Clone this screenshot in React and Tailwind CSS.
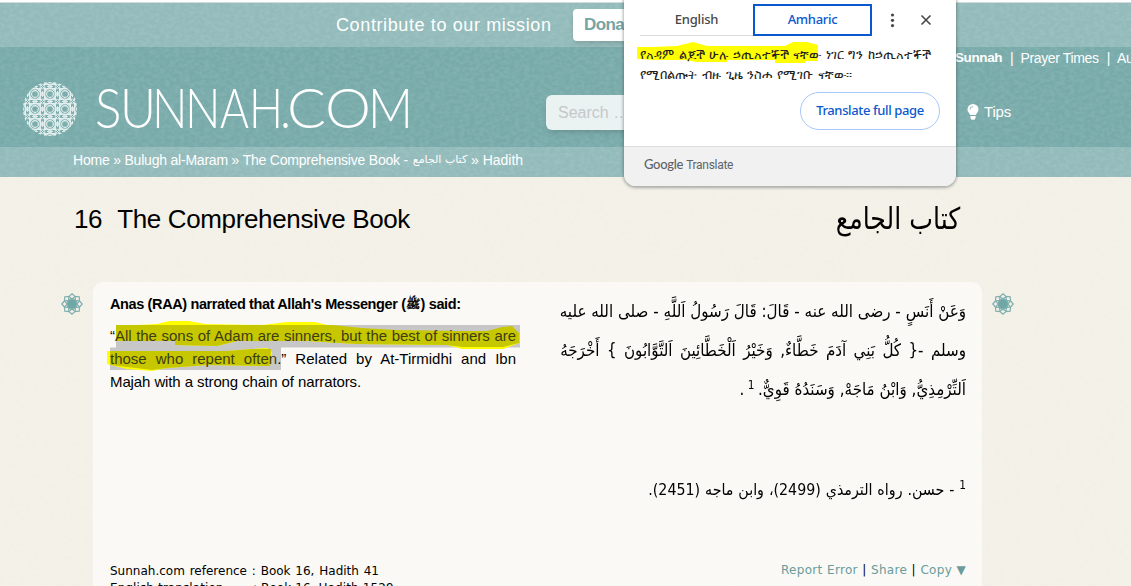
import React from "react";

function Grain({ id, dark, opacity }) {
  return (
    <svg className="pointer-events-none absolute inset-0 h-full w-full" style={{ opacity }} aria-hidden="true">
      <filter id={id} x="0" y="0" width="100%" height="100%">
        <feTurbulence type="fractalNoise" baseFrequency="0.2 0.28" numOctaves="2" seed="4" />
        <feColorMatrix values={`0 0 0 0 ${dark[0]} 0 0 0 0 ${dark[1]} 0 0 0 0 ${dark[2]} 2.4 0 0 0 -0.8`} />
      </filter>
      <rect width="100%" height="100%" filter={`url(#${id})`} />
    </svg>
  );
}

function Emblem() {
  const cells = [];
  for (let r = -2; r <= 2; r++) for (let c = -2; c <= 2; c++) cells.push([27 + c * 15, 27 + r * 15]);
  return (
    <svg className="block h-[54px] w-[54px]" viewBox="0 0 54 54" fill="none" stroke="#e6f1f0" strokeWidth="1.1">
      <clipPath id="disc"><circle cx="27" cy="27" r="27" /></clipPath>
      <g clipPath="url(#disc)">
        {cells.map(([x, y], i) => (
          <g key={i} transform={`translate(${x} ${y})`}>
            <circle r="3.4" />
            <rect x="-5.3" y="-5.3" width="10.6" height="10.6" />
            <rect x="-5.3" y="-5.3" width="10.6" height="10.6" transform="rotate(45)" />
            <path d="M-7.500 -3V3M-3 -7.500H3M-7.500 -7.500L-3.600 -3.600M7.500 7.500L3.600 3.600M-7.500 7.500L-3.600 3.600M7.500 -7.500L3.600 -3.600M-7.500 -5.300H7.500M-7.500 5.300H7.500M-5.300 -7.500V7.500M5.300 -7.500V7.500" strokeWidth=".9" />
          </g>
        ))}
      </g>
    </svg>
  );
}

function Rosette() {
  return (
    <svg className="block h-[22px] w-[22px]" viewBox="-11 -11 22 22" fill="none" stroke="#7fb0af" strokeWidth="1.2">
      <circle r="4.9" fill="#6fa6a6" />
      {[0, 45, 90, 135, 180, 225, 270, 315].map((a) => (
        <path key={a} transform={`rotate(${a})`} d="M0 -10.2L3.200 -7.400L0 -5L-3.200 -7.400Z" />
      ))}
    </svg>
  );
}

// letter, left offset, advance width
const WORDMARK = [
  ["S", 1, 26.5], ["U", 26, 36], ["N", 58, 35.5], ["N", 91, 35.5], ["A", 126, 29],
  ["H", 155, 34], [".", 186, 11], ["C", 193, 39], ["O", 231, 46], ["M", 274, 45],
];

function TranslatePopup() {
  return (
    <aside className="absolute left-[624px] -top-3 flex h-[198px] w-[332px] flex-col overflow-hidden rounded-xl bg-white font-['Noto_Sans','Open_Sans',sans-serif] shadow-[0_1px_3px_1px_rgba(60,64,67,0.4)]">
      <div className="flex h-[158px] flex-col pt-4 pl-4">
        <div className="flex h-8">
          <div className="flex w-[113px] items-center justify-center border-b border-[#dadce0] text-[13px] font-medium tracking-[-0.2px] text-[#474747]">English</div>
          <div className="flex w-[119px] items-center justify-center border-2 border-[#0b57d0] text-[13px] font-medium tracking-[-0.3px] text-[#0b57d0]">Amharic</div>
          <svg className="ml-3 h-8 w-[18px]" viewBox="0 0 18 32" fill="#474747"><circle cx="8.500" cy="11" r="1.6" /><circle cx="8.500" cy="16.3" r="1.6" /><circle cx="8.500" cy="21.6" r="1.6" /></svg>
          <svg className="ml-[15px] h-8 w-[18px]" viewBox="0 0 18 32" fill="none" stroke="#474747" strokeWidth="1.6"><path d="M4.5 11.5l9 9M13.5 11.5l-9 9" /></svg>
        </div>
        <div className="relative mt-2 h-10 text-[13px] leading-5 text-[#1f1f1f]">
          <svg className="absolute -left-[3px] -top-[2px] h-6 w-[184px]" viewBox="0 0 184 24" fill="#ffff00"><path d="M0 5H15L40 4L56 0L70 4H148L156 0H170L181 3V19H168V21H138V18H90V20H60L48 18H18L0 17Z" /></svg>
          <div className="relative w-[291px] [text-align-last:justify] whitespace-nowrap">የአዳም ልጆች ሁሉ ኃጢአተኞች ናቸው ነገር ግን ከኃጢአተኞች</div>
          <div className="relative w-[212px] [text-align-last:justify] whitespace-nowrap">የሚበልጡት ብዙ ጊዜ ንስሐ የሚገቡ ናቸው።</div>
        </div>
        <div className="mt-2 ml-[160px] flex h-[38px] w-[140px] items-center justify-center rounded-full border border-[#a8c7fa] text-[13px] font-medium tracking-[-0.37px] whitespace-nowrap text-[#0b57d0]">Translate full page</div>
      </div>
      <div className="flex flex-1 items-center gap-[3px] border-t border-[#dadce0] bg-[#f1f1f1] pb-1 pl-5 text-xs text-[#5f6368]">
        <span className="font-['Lato',sans-serif] text-[13px] font-medium tracking-[-0.3px]">Google</span><span className="font-['Roboto',sans-serif] tracking-[-0.3px]">Translate</span>
      </div>
    </aside>
  );
}

export default function App() {
  return (
    <div className="relative flex h-[586px] w-[1131px] flex-col overflow-hidden bg-[#f4f1e9] font-['Liberation_Sans',Arial,sans-serif] text-black">
      <Grain id="paper" dark={[0.87, 0.85, 0.77]} opacity={0.35} />
      <header className="relative flex flex-col bg-[#78aaaa] text-white">
        <Grain id="teal" dark={[0.38, 0.57, 0.57]} opacity={0.25} />
        <div className="relative h-[3px] border-b border-[#d5d9d9] bg-white" />
        <div className="relative flex h-11 items-center bg-white/20 pl-[336px]">
          <span className="w-[216px] text-[18px] tracking-[0.62px] whitespace-nowrap">Contribute to our mission</span>
          <span className="ml-[21px] flex h-8 w-[90px] items-center rounded bg-white pl-[11px] text-[17px] font-bold tracking-[-0.6px] text-[#76a4a4] shadow-md">Donate</span>
        </div>
        <div className="relative flex h-[100px]">
          <div className="flex pt-[35px] pl-[23px]"><Emblem /></div>
          <svg className="mt-[30px] ml-[17px] h-[60px] w-[320px] shrink-0" viewBox="0 0 320 60" fill="#fff" fontFamily="Lato" fontWeight="300" fontSize="56">
            <text y="51">
              {WORDMARK.map(([ch, x, w], i) => (
                <tspan key={i} x={x} textLength={w} lengthAdjust="spacingAndGlyphs">{ch}</tspan>
              ))}
            </text>
          </svg>
          <div className="mt-12 ml-[132px] flex h-[35px] w-[380px] items-center rounded-md bg-[#eaf2f2] pl-3 text-base text-[#c5c8c8] shadow-md">Search …</div>
          <div className="absolute top-0 left-[955px] flex h-full w-[176px] flex-col overflow-hidden whitespace-nowrap">
            <div className="flex h-[21px] items-center gap-[7px] text-sm tracking-[-0.35px]"><b className="text-[13.500px] tracking-[-0.4px]">Sunnah</b><span className="ml-px">|</span><span>Prayer Times</span><span className="ml-px">|</span><span>Audio</span></div>
            <div className="mt-[34px] ml-3 flex items-center gap-[5px] text-[15px] leading-5 tracking-[-0.2px]">
              <svg className="h-4 w-3" viewBox="0 0 12 16" fill="#fff"><path d="M6 0a5.5 5.5 0 0 0-5.5 5.5C.5 8 2.6 9 3.2 11h5.6C9.400 9 11.500 8 11.500 5.500A5.500 5.500 0 0 0 6 0M3.400 12h5.200v2L7.500 15.700h-3L3.400 14z" /><path d="M3 5.500a3 3 0 0 1 3-3" fill="none" stroke="#76a8a8" strokeWidth=".8" /></svg>
              Tips
            </div>
          </div>
        </div>
        <nav className="relative flex h-[30px] items-center bg-white/20 pb-1 pl-[73px] text-sm whitespace-nowrap">
          <span className="w-[335px] tracking-[-0.22px] [text-align-last:justify]">Home » Bulugh al-Maram » The Comprehensive Book -</span>
          <span dir="rtl" className="ml-1 w-[56px] text-center font-['DejaVu_Sans',sans-serif] text-[11px]">كتاب الجامع</span>
          <span className="ml-[3px]">» Hadith</span>
        </nav>
      </header>

      <main className="relative flex flex-1 flex-col">
        <div className="flex h-[105px] items-start justify-between pr-[171px] pl-[74px]">
          <h1 className="flex gap-[15px] pt-[26px] text-[26px] leading-8 whitespace-nowrap"><span className="tracking-[-0.4px]">16</span><span className="tracking-[-0.35px]">The Comprehensive Book</span></h1>
          <h1 dir="rtl" className="origin-right scale-x-[0.84] pt-[22px] font-['DejaVu_Sans',sans-serif] text-[30px] leading-10 whitespace-nowrap">كتاب الجامع</h1>
        </div>
        <div className="flex flex-1 items-start pl-[61px]">
          <div className="mt-[11px]"><Rosette /></div>
          <article className="ml-[10px] flex h-[320px] w-[889px] flex-col rounded-[10px] bg-white/60 pt-2 pr-4 pl-[17px]">
            <div className="flex h-[273px] justify-between">
              <section className="w-[410px] text-[15px] leading-[23px] whitespace-nowrap">
                <p className="flex h-7 items-center text-[14.5px] font-bold tracking-[-0.38px]">Anas (RAA) narrated that Allah's Messenger (<span className="font-['DejaVu_Sans'] text-[12px]">ﷺ</span>) said:</p>
                <div className="relative mt-[6px]">
                  <svg className="absolute -left-[3px] -top-[3px] h-[54px] w-[416px]" viewBox="0 0 416 54">
                    <path d="M9 4H413V26.500H174V49H3V26.500H9Z" fill="#c7c7c7" />
                    <path d="M9 5L50 3L62 0H82L98 3L155 4L180 1H208L220 4L260 8L290 11L350 14L380 10L400 5L412 6V22L396 28H355L340 24L250 23L200 20L130 20L110 25L68 24V20H9Z" fill="#ffff00" />
                    <path d="M0 30L40 31L120 30L145 28L160 27L165 31L163 45L100 44L60 47L45 50L20 48L0 43Z" fill="#ffff00" />
                    <path d="M9 4H412V22L396 26H355L340 24L250 23L200 20L130 20L110 25L68 24V20H9ZM3 30L120 30L145 28H164L163 45L100 44L60 47L45 49L3 44Z" fill="#c7c700" />
                    <path d="M225 4H413V13L405 5L395 6L380 10L350 10L290 9L255 7Z" fill="#c7c7c7" />
                  </svg>
                  <p className="relative w-[406px] tracking-[-0.05px] [text-align-last:justify]">“<span className="text-[#3d3d12]">All the sons of Adam are sinners, but the best of sinners are</span></p>
                  <p className="relative w-[406px] [text-align-last:justify]"><span className="text-[#3d3d12]">those who repent often</span>.” Related by At-Tirmidhi and Ibn</p>
                  <p className="w-[251px] tracking-[-0.12px] [text-align-last:justify]">Majah with a strong chain of narrators.</p>
                </div>
              </section>
              <section dir="rtl" className="w-[406px] pt-[2px] font-['DejaVu_Sans',sans-serif] text-[17px] leading-[39px] whitespace-nowrap">
                <div className="w-[456px] origin-right scale-x-[0.89]">
                  <p className="[text-align-last:justify]">وَعَنْ أَنَسٍ - رضى الله عنه - قَالَ: قَالَ رَسُولُ اَللَّهِ - صلى الله عليه</p>
                  <p className="[text-align-last:justify]">وسلم -{"{"} كُلُّ بَنِي آدَمَ خَطَّاءٌ, وَخَيْرُ اَلْخَطَّائِينَ اَلتَّوَّابُونَ {"}"} أَخْرَجَهُ</p>
                  <p>اَلتِّرْمِذِيُّ, وَابْنُ مَاجَهْ, وَسَنَدُهُ قَوِيٌّ.<sup className="text-[12px] leading-none"> 1 </sup>.</p>
                  <p className="mt-[69px] w-[357px] text-base [text-align-last:justify]"><sup className="text-[12px] leading-none">1</sup> - حسن. رواه الترمذي (2499)، وابن ماجه (2451).</p>
                </div>
              </section>
            </div>
            <footer className="flex justify-between font-['DejaVu_Sans',sans-serif] text-xs leading-[17px] whitespace-nowrap">
              <div>
                <p className="w-[269px] [text-align-last:justify]">Sunnah.com reference : Book 16, Hadith 41</p>
                <p className="flex"><span className="w-[143px] tracking-[0.1px]">English translation</span><span className="tracking-[0.1px]">: Book 16, Hadith 1529</span></p>
              </div>
              <p className="-mt-px w-[185px] tracking-[0.3px] text-[#699c9b] [text-align-last:justify]">Report Error <span className="text-black">|</span> Share <span className="text-black">|</span> Copy ▼</p>
            </footer>
          </article>
          <div className="mt-[11px] ml-[10px]"><Rosette /></div>
        </div>
      </main>
      <TranslatePopup />
    </div>
  );
}
